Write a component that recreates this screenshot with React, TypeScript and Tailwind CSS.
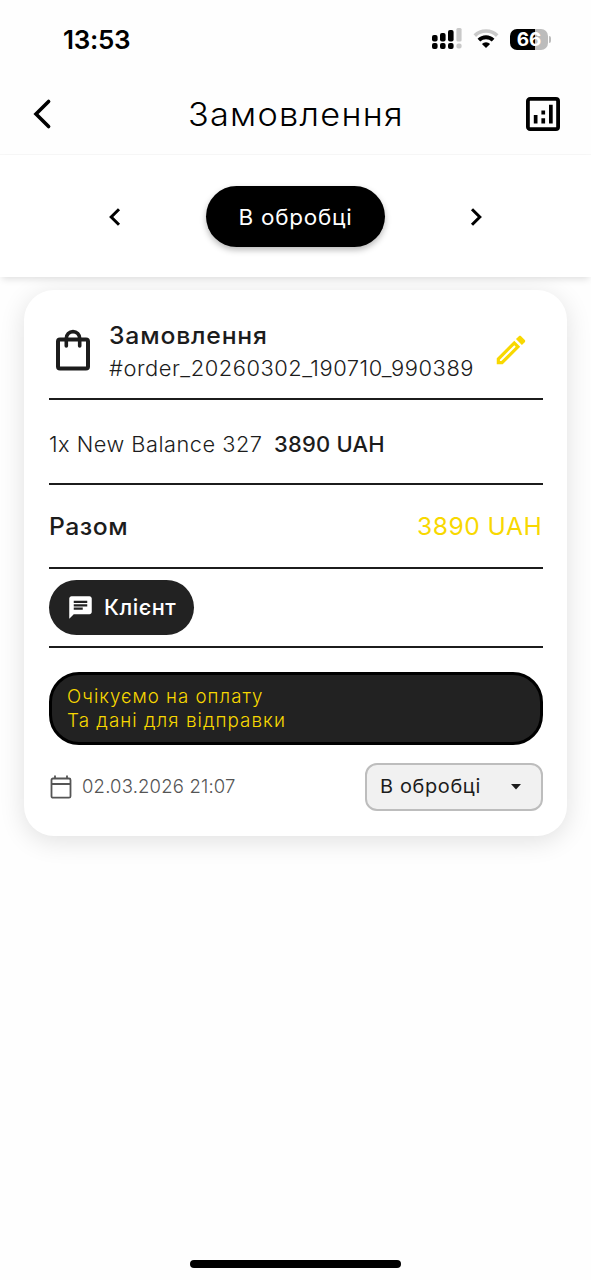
import type { ReactNode } from "react";

function StatusBar() {
  return (
    <div className="flex h-[78px] items-center pl-[63px] pr-[40px]">
      <span className="pt-[2px] text-[26px] font-semibold leading-none tracking-[-0.3px]">13:53</span>
      <div className="ml-auto flex items-center">
        <svg width="30" height="22" viewBox="0 0 30 22">
          <g fill="#000">
            <rect x="0" y="7" width="5.6" height="6.4" rx="2" />
            <rect x="8" y="5" width="5.6" height="8.4" rx="2" />
            <rect x="16" y="2" width="5.6" height="11.4" rx="2" />
            <rect x="0" y="15" width="5.6" height="6" rx="2" />
            <rect x="8" y="15" width="5.6" height="6" rx="2" />
            <rect x="16" y="15" width="5.6" height="6" rx="2" />
          </g>
          <g fill="#c9c9c9">
            <rect x="24.4" y="0" width="5.2" height="13.4" rx="1.5" />
            <rect x="24.4" y="15.4" width="5.2" height="5.2" rx="2" />
          </g>
        </svg>
        <svg className="ml-[11px]" width="26" height="22" viewBox="0 0 26 22">
          <path d="M1.8 7.6 A16 16 0 0 1 24.2 7.6" fill="none" stroke="#c9c9c9" strokeWidth="3.6" />
          <path d="M5.9 12.2 A10 10 0 0 1 20.1 12.2" fill="none" stroke="#000" strokeWidth="3.8" />
          <path d="M13 20 L8.9 15.9 A5.8 5.8 0 0 1 17.1 15.9 Z" fill="#000" />
        </svg>
        <div className="ml-[11px] flex h-[21px] w-[38px] items-center justify-center rounded-[7px] bg-linear-to-r from-black from-66% to-[#bcbcbc] to-66% text-[19px] font-bold leading-none text-white">
          66
        </div>
        <div className="ml-px h-[7px] w-[2px] rounded-r-full bg-[#bcbcbc]" />
      </div>
    </div>
  );
}

function Header() {
  return (
    <header className="flex h-[77px] items-center justify-between border-b border-[#f7f7f7] pb-[4px] pl-[32px] pr-[31px]">
      <svg width="20" height="32" viewBox="0 0 20 32">
        <path d="M16.6 3.4 L4 16 L16.6 28.6" fill="none" stroke="#000" strokeWidth="3.6" strokeLinecap="round" strokeLinejoin="miter" />
      </svg>
      <h1 className="ml-[13px] scale-x-[1.07] whitespace-nowrap pt-px text-[32px] font-light leading-none tracking-[1.2px]">Замовлення</h1>
      <svg width="34" height="34" viewBox="0 0 34 34">
        <rect x="1.9" y="1.9" width="30.2" height="30.2" rx="2.2" fill="none" stroke="#000" strokeWidth="3.8" />
        <path d="M7.8 18h3.7v8.6H7.8zM15.4 21.2h3.7v5.4h-3.7zM15.4 13.6h3.7v3.8h-3.7zM23 7.8h3.7v18.8H23z" />
      </svg>
    </header>
  );
}

function StatusTabs() {
  return (
    <nav className="relative z-10 flex h-[122px] items-center justify-between bg-white px-[108px] pt-px shadow-[0_4px_7px_-2px_rgba(0,0,0,0.13)]">
      <svg width="14" height="20" viewBox="0 0 14 20">
        <path d="M11 2.2 L3.2 10 L11 17.8" fill="none" stroke="#000" strokeWidth="3" />
      </svg>
      <button className="flex h-[61px] w-[179px] items-center justify-center rounded-full bg-black pt-[3px] text-[21.5px] leading-none tracking-[0.7px] text-white shadow-[0_3px_6px_rgba(0,0,0,0.28)]">
        <span className="scale-x-[1.045]">В обробці</span>
      </button>
      <svg width="14" height="20" viewBox="0 0 14 20">
        <path d="M3 2.2 L10.8 10 L3 17.8" fill="none" stroke="#000" strokeWidth="3" />
      </svg>
    </nav>
  );
}

function Row({ className, children }: { className: string; children: ReactNode }) {
  return <div className={`flex items-center border-b-2 border-[#1c1c1c] ${className}`}>{children}</div>;
}

function OrderCard() {
  return (
    <article className="mx-6 mt-[13px] h-[546px] rounded-[30px] bg-white px-[24.5px] text-[#1c1c1c] shadow-[0_5px_26px_rgba(0,0,0,0.12)]">
      <Row className="h-[109.5px] pt-[13px]">
        <svg className="ml-[7px]" width="34" height="42" viewBox="0 0 34 42">
          <rect x="2" y="10.5" width="30" height="29" rx="2" fill="none" stroke="#1c1c1c" strokeWidth="4" />
          <path d="M10.3 17 V9.5 A6.7 6.9 0 0 1 23.7 9.5 V17" fill="none" stroke="#1c1c1c" strokeWidth="3.6" strokeLinecap="round" />
        </svg>
        <div className="ml-[19.5px] whitespace-nowrap pt-[3px] leading-[33px]">
          <div className="origin-left scale-x-[1.03] text-[24px] font-medium tracking-[0.8px]">Замовлення</div>
          <div className="origin-left scale-x-[1.044] text-[21px] font-light tracking-[0.5px]">#order_20260302_190710_990389</div>
        </div>
        <svg className="ml-auto mr-[13px]" width="38" height="38" viewBox="0 0 24 24" fill="#f8d800">
          <path d="M14.06 9.02l.92.92L5.92 19H5v-.92l9.06-9.06M17.66 3c-.25 0-.51.1-.7.29l-1.83 1.83 3.75 3.75 1.83-1.83c.39-.39.39-1.02 0-1.41l-2.34-2.34c-.2-.2-.45-.29-.71-.29zm-3.6 3.19L3 17.25V21h3.75L17.81 9.94l-3.75-3.75z" />
        </svg>
      </Row>
      <Row className="h-[85px] whitespace-nowrap pt-[7px] text-[21px]">
        <span className="origin-left scale-x-[1.035] font-light tracking-[0.5px]">1x New Balance 327</span>
        <span className="ml-[19px] origin-left scale-x-[1.045] font-medium tracking-[0.2px]">3890 UAH</span>
      </Row>
      <Row className="h-[84.5px] justify-between pt-[3px] text-[24px]">
        <span className="origin-left scale-x-[1.03] font-medium tracking-[0.5px]">Разом</span>
        <span className="origin-right scale-x-[1.025] tracking-[0.5px] text-[#f8d800]">3890 UAH</span>
      </Row>
      <Row className="h-[79px]">
        <button className="flex h-[55px] w-[145px] items-center rounded-full bg-[#222] pl-[18px] text-[21px] font-medium leading-none tracking-[0.5px] text-white">
          <svg className="mr-[10px] shrink-0" width="27" height="27" viewBox="0 0 24 24" fill="#fff">
            <path d="M20 2H4c-1.100 0-1.990.9-1.990 2L2 22l4-4h14c1.100 0 2-.9 2-2V4c0-1.100-.9-2-2-2zM6 9h12v2H6V9zm8 5H6v-2h8v2zm4-6H6V6h12v2z" />
          </svg>
          <span className="origin-left scale-x-[1.035]">Клієнт</span>
        </button>
      </Row>
      <div className="mt-[24px] flex h-[72.5px] flex-col justify-center rounded-[30px] border-[3px] border-black bg-[#222] pb-px pl-[15.5px] text-[18.5px] font-light leading-[24px] text-[#f8d800]">
        <span className="origin-left scale-x-[1.01] tracking-[1px]">Очікуємо на оплату</span>
        <span className="origin-left scale-x-[1.02] tracking-[1px]">Та дані для відправки</span>
      </div>
      <div className="mt-[18px] flex h-[48px] items-center">
        <svg className="ml-[1px]" width="22" height="24" viewBox="0 0 22 24" fill="none" stroke="#555" strokeWidth="1.8">
          <rect x="1.5" y="3.5" width="19" height="19.2" rx="1.5" />
          <path d="M1.5 9h19M5 .5v3M17 .5v3" />
        </svg>
        <span className="ml-[10.5px] text-[18.5px] font-light tracking-[0.18px] text-[#555]">02.03.2026 21:07</span>
        <button className="ml-auto flex h-[48px] w-[178px] items-center justify-between rounded-[12px] border-2 border-[#bdbdbd] bg-[#f1f1f1] pl-[13px] pr-[20px] text-[19px] leading-none tracking-[0.6px]">
          <span className="origin-left scale-x-[1.05]">В обробці</span>
          <svg width="10" height="6" viewBox="0 0 10 6">
            <path d="M0 0h10L5 5.5z" fill="#1c1c1c" />
          </svg>
        </button>
      </div>
    </article>
  );
}

export default function App() {
  return (
    <main className="flex h-[1280px] w-[591px] flex-col overflow-hidden bg-[#fefefe] font-['Inter','Noto_Sans',sans-serif] text-black">
      <StatusBar />
      <Header />
      <StatusTabs />
      <OrderCard />
      <div className="mx-auto mb-[12px] mt-auto h-[8px] w-[211px] rounded-full bg-black" />
    </main>
  );
}
